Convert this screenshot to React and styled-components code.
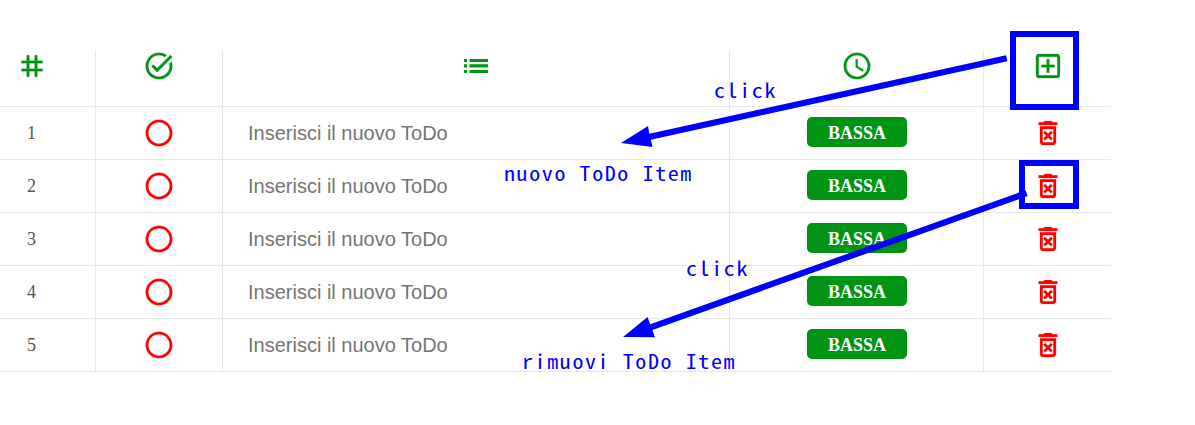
import React from "react";
import styled, { createGlobalStyle } from "styled-components";
import {
  MdTag,
  MdTaskAlt,
  MdAccessTime,
  MdOutlineAddBox,
  MdOutlineDeleteForever,
  MdRadioButtonUnchecked,
} from "react-icons/md";

const GlobalStyle = createGlobalStyle`
  body { margin: 0; background: #fff; }
  * { box-sizing: border-box; }
`;

const Page = styled.main`
  position: relative;
  width: 1195px;
  height: 425px;
  padding-top: 50px;
  overflow: hidden;
`;

const Table = styled.div`
  width: 1111px;
`;

const Row = styled.div`
  display: grid;
  grid-template-columns: 96px 127px 507px 254px 127px;
  height: ${(p) => (p.$header ? 57 : 53)}px;
  border-bottom: 1px solid #e5e9ea;
`;

const Cell = styled.div`
  display: flex;
  align-items: ${(p) => (p.$header ? "flex-start" : "center")};
  justify-content: ${(p) => (p.$start ? "flex-start" : "center")};
  padding: ${(p) => (p.$header ? "0" : "0 0 1px")};
  border-right: ${(p) => (p.$last ? "0" : "1px solid #e5e9ea")};
  color: ${(p) => (p.$tone === "red" ? "#ff0000" : "#009414")};

  svg {
    display: block;
    width: 32px;
    height: 32px;
    flex: none;
    stroke-width: 0.15px;
  }

  svg path[fill="none"] { stroke: none; }
`;

const IndexCell = styled(Cell)`
  padding-right: ${(p) => (p.$header ? 31 : 32)}px;
  color: #555;
  font: 18px/22px "Liberation Serif", serif;

  svg { color: #009414; }
`;

const Input = styled.input`
  width: 100%;
  padding: 0 25px;
  border: 0;
  outline: 0;
  background: transparent;
  font: 20px/24px "Liberation Sans", sans-serif;

  &::placeholder { color: #757575; opacity: 1; }
`;

const Priority = styled.button`
  width: 100px;
  height: 30px;
  margin-bottom: 1px;
  padding: 2px 0 0 1px;
  border: 0;
  border-radius: 5px;
  background: #009414;
  color: #fff;
  font: bold 18px/28px "Liberation Serif", serif;
`;

const Arrows = styled.svg`
  position: absolute;
  inset: 0;
  fill: #0000ff;
`;

const Highlight = styled.div`
  position: absolute;
  left: ${(p) => p.$x}px;
  top: ${(p) => p.$y}px;
  width: ${(p) => p.$w}px;
  height: ${(p) => p.$h}px;
  border: 6px solid #0000ff;
`;

const Note = styled.span`
  position: absolute;
  left: ${(p) => p.$x}px;
  top: ${(p) => p.$y}px;
  color: #0000ff;
  font: 20px/24px "Noto Sans Mono CJK JP", "DejaVu Sans Mono", monospace;
  letter-spacing: 1.45px;
  white-space: pre;
  transform: scaleX(1.1);
  transform-origin: left;
`;

function ListIcon() {
  return (
    <svg viewBox="0 0 32 32" fill="currentColor">
      <path d="M4 9h3v3H4zM4 14.3h3v3.2H4zM4 20h3v3H4zM9.5 9H28v3H9.5zM9.5 14.3H28v3.2H9.5zM9.5 20H28v3H9.5z" />
    </svg>
  );
}

export default function App() {
  return (
    <Page>
      <GlobalStyle />
      <Table>
        <Row $header>
          <IndexCell $header><MdTag /></IndexCell>
          <Cell $header><MdTaskAlt /></Cell>
          <Cell $header><ListIcon /></Cell>
          <Cell $header><MdAccessTime /></Cell>
          <Cell $header $last><MdOutlineAddBox /></Cell>
        </Row>
        {[1, 2, 3, 4, 5].map((n) => (
          <Row key={n}>
            <IndexCell>{n}</IndexCell>
            <Cell $tone="red"><MdRadioButtonUnchecked /></Cell>
            <Cell $start><Input placeholder="Inserisci il nuovo ToDo" /></Cell>
            <Cell><Priority>BASSA</Priority></Cell>
            <Cell $tone="red" $last><MdOutlineDeleteForever /></Cell>
          </Row>
        ))}
      </Table>
      <Highlight $x={1010} $y={31} $w={69} $h={79} />
      <Highlight $x={1019} $y={160} $w={60} $h={49} />
      <Arrows width="1195" height="425" viewBox="0 0 1195 425">
        <path d="M621 143L648 126L649.3 133.8L1006 55.3L1007.4 61.3L650.9 139.7L652.5 147Z" />
        <path d="M623 337L647.5 317L650.2 324.2L1025.5 190.2L1027.7 196L652.4 330L655 337.3Z" />
      </Arrows>
      <Note $x={713.5} $y={78}>click</Note>
      <Note $x={503.5} $y={161}>nuovo ToDo Item</Note>
      <Note $x={685.5} $y={256}>click</Note>
      <Note $x={521.5} $y={349}>rimuovi ToDo Item</Note>
    </Page>
  );
}
